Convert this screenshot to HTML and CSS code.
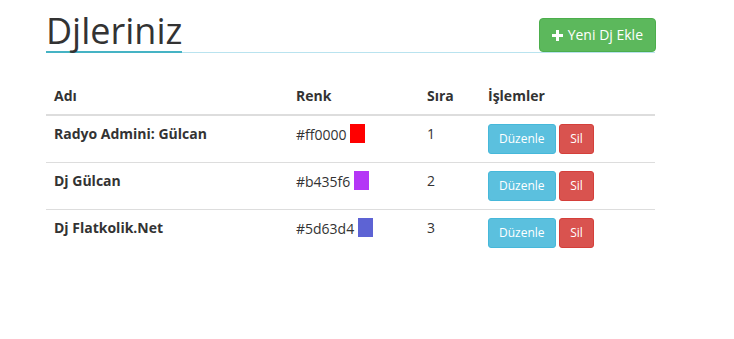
FILE: index.html
```html
<!DOCTYPE html>
<html>
<head>
<meta charset="utf-8">
<link rel="stylesheet" href="styles.css">
</head>
<body>
<div class="container">
  <div class="page-header">
    <h1 class="title">Djleriniz</h1>
    <a class="btn btn-success" href="#">
      <svg class="icon" width="11" height="11" viewBox="0 0 11 11"><path d="M4 0h3v4h4v3H7v4H4V7H0V4h4z" fill="#fff"/></svg>
      Yeni Dj Ekle
    </a>
  </div>

  <table class="table">
    <thead>
      <tr>
        <th class="col-name">Adı</th>
        <th class="col-color">Renk</th>
        <th class="col-order">Sıra</th>
        <th>İşlemler</th>
      </tr>
    </thead>
    <tbody>
      <tr>
        <td class="name">Radyo Admini: Gülcan</td>
        <td>#ff0000 <span class="swatch" style="background:#ff0000"></span></td>
        <td>1</td>
        <td><a class="btn btn-sm btn-info" href="#">Düzenle</a> <a class="btn btn-sm btn-danger" href="#">Sil</a></td>
      </tr>
      <tr>
        <td class="name">Dj Gülcan</td>
        <td>#b435f6 <span class="swatch" style="background:#b435f6"></span></td>
        <td>2</td>
        <td><a class="btn btn-sm btn-info" href="#">Düzenle</a> <a class="btn btn-sm btn-danger" href="#">Sil</a></td>
      </tr>
      <tr>
        <td class="name">Dj Flatkolik.Net</td>
        <td>#5d63d4 <span class="swatch" style="background:#5d63d4"></span></td>
        <td>3</td>
        <td><a class="btn btn-sm btn-info" href="#">Düzenle</a> <a class="btn btn-sm btn-danger" href="#">Sil</a></td>
      </tr>
    </tbody>
  </table>
</div>
</body>
</html>
```

FILE: styles.css
```css
html, body {
  margin: 0;
  padding: 0;
  background: #fff;
  font-family: "Open Sans", sans-serif;
  font-size: 14px;
  line-height: 20px;
  color: #333;
}
.container {
  width: 609px;
  margin-left: 46px;
}
.page-header {
  display: flex;
  justify-content: space-between;
  align-items: flex-end;
  margin-top: 11px;
  border-bottom: 1px solid #b9e3ef;
}
.title {
  margin: 0 0 -1px 0;
  font-size: 36px;
  font-weight: 400;
  line-height: 40px;
  color: #333;
  border-bottom: 2px solid #45b3c4;
}
.btn {
  display: inline-block;
  box-sizing: border-box;
  padding: 6px 12px;
  font-size: 14px;
  line-height: 20px;
  border: 1px solid transparent;
  border-radius: 4px;
  color: #fff;
  text-decoration: none;
  white-space: nowrap;
}
.btn-success {
  background: #5cb85c;
  border-color: #4cae4c;
  margin-right: -1px;
  height: 34px;
}
.icon {
  margin-right: 1px;
  vertical-align: -1px;
}
.btn-sm {
  padding: 5px 10px;
  font-size: 12px;
  line-height: 18px;
  border-radius: 3px;
}
.btn-info {
  background: #5bc0de;
  border-color: #46b8da;
}
.btn-danger {
  background: #d9534f;
  border-color: #d43f3a;
}
.table {
  width: 100%;
  margin-top: 25px;
  border-collapse: collapse;
  border-spacing: 0;
}
.table th {
  text-align: left;
  font-weight: 700;
  padding: 8px;
  border-bottom: 2px solid #ddd;
  vertical-align: bottom;
}
.table td {
  padding: 8px;
  border-top: 1px solid #ddd;
  vertical-align: top;
}
.col-name {
  width: 226px;
}
.col-color {
  width: 115px;
}
.col-order {
  width: 45px;
}
.name {
  font-weight: 700;
}
.swatch {
  display: inline-block;
  width: 15px;
  height: 19px;
  vertical-align: -3px;
}
```
